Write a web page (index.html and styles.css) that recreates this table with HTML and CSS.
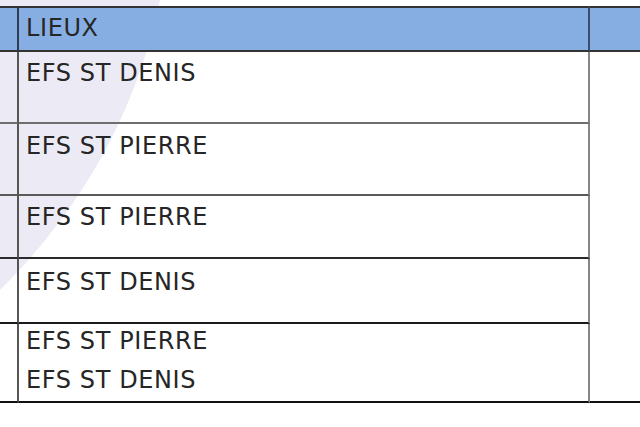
FILE: index.html
```html
<!DOCTYPE html>
<html lang="fr">
<head>
<meta charset="utf-8">
<title>Lieux</title>
<link rel="stylesheet" href="styles.css">
</head>
<body>
<div class="page">
  <svg class="watermark" width="640" height="427" viewBox="0 0 640 427" aria-hidden="true">
    <path d="M0 0H160C140 90 100 190 0 290Z" fill="#ECEAF5"/>
  </svg>
  <table class="grid">
    <thead>
      <tr class="head">
        <th class="c0"></th>
        <th class="c1">LIEUX</th>
        <th class="c2"></th>
      </tr>
    </thead>
    <tbody>
      <tr class="r1">
        <td class="c0"></td>
        <td class="c1">EFS ST DENIS</td>
        <td class="c2 merged" rowspan="5"></td>
      </tr>
      <tr class="r2">
        <td class="c0"></td>
        <td class="c1">EFS ST PIERRE</td>
      </tr>
      <tr class="r3">
        <td class="c0"></td>
        <td class="c1">EFS ST PIERRE</td>
      </tr>
      <tr class="r4">
        <td class="c0"></td>
        <td class="c1">EFS ST DENIS</td>
      </tr>
      <tr class="r5">
        <td class="c0"></td>
        <td class="c1">
          <div class="line">EFS ST PIERRE</div>
          <div class="line">EFS ST DENIS</div>
        </td>
      </tr>
    </tbody>
  </table>
</div>
</body>
</html>
```

FILE: styles.css
```css
* {
  box-sizing: border-box;
}

body {
  margin: 0;
  background: #ffffff;
  font-family: "DejaVu Sans", "Open Sans", sans-serif;
}

.page {
  position: relative;
  width: 640px;
  height: 427px;
  overflow: hidden;
}

.watermark {
  position: absolute;
  left: 0;
  top: 0;
}

.grid {
  position: relative;
  margin-top: 6px;
  border-spacing: 0;
  table-layout: fixed;
  width: 640px;
}

.grid th,
.grid td {
  padding: 0 0 0 7px;
  vertical-align: top;
  text-align: left;
  font-weight: 400;
  font-size: 24px;
  line-height: 32px;
  letter-spacing: 0.6px;
  color: #262626;
  white-space: nowrap;
}

.grid .c0 {
  width: 19px;
  padding-left: 0;
  border-right: 2px solid #555555;
}

.grid .c1 {
  width: 571px;
  border-right: 2px solid #878787;
}

.grid .c2 {
  width: 50px;
}

.head th {
  height: 46px;
  padding-top: 4px;
  background: #86aee3;
  border-top: 2px solid #333333;
  border-bottom: 2px solid #333333;
}

.head .c0 {
  border-right-color: #2e3c52;
}

.head .c1 {
  border-right-color: #3a4e6c;
}

.r1 td {
  height: 72px;
  padding-top: 5px;
  border-bottom: 2px solid #6e6e6e;
}

.r2 td {
  height: 72px;
  padding-top: 6px;
  border-bottom: 2px solid #5a5a5a;
}

.r3 td {
  height: 63px;
  padding-top: 5px;
  border-bottom: 2px solid #2a2a2a;
}

.r4 td {
  height: 65px;
  padding-top: 7px;
  border-bottom: 2px solid #1a1a1a;
}

.r5 td {
  height: 79px;
  padding-top: 1px;
  border-bottom: 2px solid #111111;
}

.r1 .merged {
  height: auto;
  padding: 0;
  border-bottom: 2px solid #111111;
}

.line + .line {
  margin-top: 7px;
}
```
